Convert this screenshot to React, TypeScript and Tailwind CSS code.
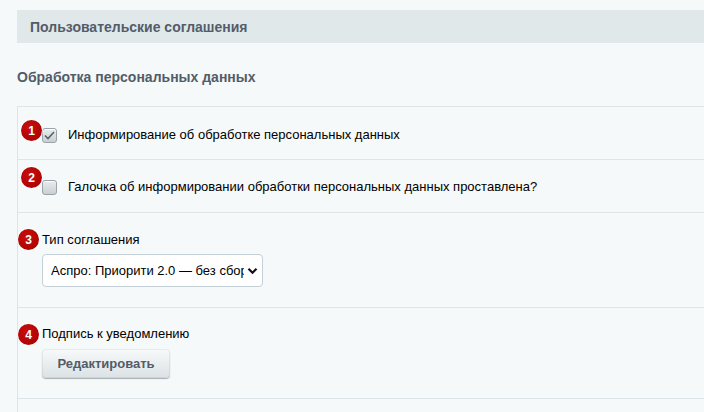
import { ReactNode } from "react";

const Badge = ({ n, className }: { n: number; className: string }) => (
  <span
    className={`absolute flex h-[21px] w-[21px] items-center justify-center rounded-full bg-[radial-gradient(circle_at_40%_35%,#c80d0d,#a50000)] text-[12px] font-bold leading-none text-white shadow-[0_0_0_1px_rgba(255,255,255,0.6)] ${className}`}
  >
    {n}
  </span>
);

const Checkbox = ({ checked }: { checked?: boolean }) => (
  <span className="flex h-[15px] w-[15px] shrink-0 items-center justify-center rounded-[3px] border border-[#9aa3a8] bg-gradient-to-b from-[#e9ecee] to-[#c9cfd2] shadow-[inset_0_1px_0_#fff]">
    {checked && (
      <svg width="11" height="9" viewBox="0 0 11 9" fill="none">
        <path d="M1 4.5 L4 7.5 L10 1" stroke="#5b6064" strokeWidth="1.6" />
      </svg>
    )}
  </span>
);

const Row = ({ children, className }: { children: ReactNode; className: string }) => (
  <div className={`relative border-t border-[#dbe5ea] pl-[24px] ${className}`}>{children}</div>
);

export default function App() {
  return (
    <div className="h-screen overflow-hidden bg-[#f5f9f9] pl-[17px] pt-[10px] font-['Liberation_Sans',Arial,sans-serif] text-[13px] leading-[16px] text-black">
      <div className="flex h-[33px] items-center bg-[#e0e8ea] pl-[13px] text-[14px] font-bold text-[#535c69]">
        Пользовательские соглашения
      </div>
      <div className="pb-[21px] pt-[26px] text-[14px] font-bold text-[#535c69]">Обработка персональных данных</div>

      <div className="border-l border-[#dbe5ea]">
        <Row className="pb-[16px] pt-[20px]">
          <Badge n={1} className="left-[3px] top-[13px]" />
          <label className="flex items-center gap-[11px]">
            <Checkbox checked />
            <span>Информирование об обработке персональных данных</span>
          </label>
        </Row>

        <Row className="pb-[17px] pt-[19px]">
          <Badge n={2} className="left-[3px] top-[7px]" />
          <label className="flex items-center gap-[11px]">
            <Checkbox />
            <span>Галочка об информировании обработки персональных данных проставлена?</span>
          </label>
        </Row>

        <Row className="pb-[20px] pt-[19px]">
          <Badge n={3} className="left-0 top-[16px]" />
          <div>Тип соглашения</div>
          <div className="mt-[6px] flex h-[33px] w-[221px] items-center rounded-[4px] border border-[#c3d0d8] bg-white pl-[8px] pr-[4px]">
            <span className="w-[193px] overflow-hidden whitespace-nowrap">Аспро: Приорити 2.0 — без сбора</span>
            <svg className="ml-auto" width="11" height="8" viewBox="0 0 11 8" fill="none">
              <path d="M1.5 1.8 L5.5 5.8 L9.5 1.8" stroke="#111" strokeWidth="2.2" />
            </svg>
          </div>
        </Row>

        <Row className="pb-[20px] pt-[18px]">
          <Badge n={4} className="left-0 top-[16px]" />
          <div>Подпись к уведомлению</div>
          <button className="mt-[7px] h-[29px] w-[128px] rounded-[4px] bg-gradient-to-b from-[#f8fafa] to-[#dbe2e5] font-bold text-[#535c69] shadow-[0_1px_1px_rgba(0,0,0,0.3),inset_0_0_0_1px_rgba(0,0,0,0.06)]">
            Редактировать
          </button>
        </Row>

        <Row className="h-[40px]">
          <span />
        </Row>
      </div>
    </div>
  );
}
